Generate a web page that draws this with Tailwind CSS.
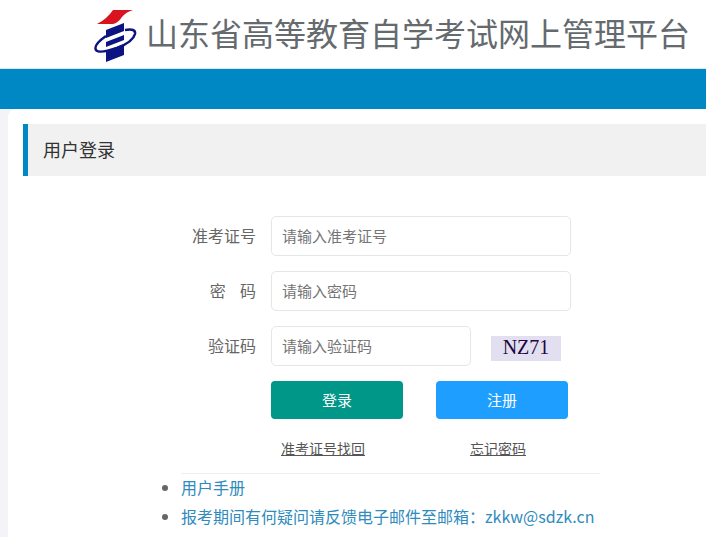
<!DOCTYPE html>
<html lang="zh-CN">
<head>
    <meta charset="UTF-8">
    <meta name="viewport" content="width=device-width, initial-scale=1.0">
    <title>山东省高等教育自学考试网上管理平台</title>
    <script src="https://cdn.jsdelivr.net/npm/@tailwindcss/browser@4"></script>
</head>
<body class="h-[537px] overflow-hidden bg-white font-['Noto_Sans_CJK_SC','Liberation_Sans',sans-serif] text-[#666]">
    <!-- Header -->
    <header class="h-[69px] flex items-center pl-[93px] bg-white border-b border-[#d8e6ee]">
        <svg width="44" height="54" viewBox="0 0 44 54" class="mt-[3px] shrink-0">
            <path d="M20 1 H40 Q33 3 29 8 Q25 14 20 15 H4 Q14 10 20 1 Z" fill="#d9141e"/>
            <path d="M13 21 L31 14 V22 L13 29 Z" fill="#0b1480"/>
            <path d="M13 33 L31 26 V31 L13 38 Z" fill="#0b1480"/>
            <path d="M13 42 L31 35 V46 L13 53 Z" fill="#0b1480"/>
            <path d="M32 21 Q43 19 42 25 Q40 33 24 39 Q6 45 3 41 Q0 36 13 27" fill="none" stroke="#0b1480" stroke-width="2.5"/>
        </svg>
        <h1 class="ml-[11px] text-[32px] leading-[40px] font-normal whitespace-nowrap text-[#646a6e] mt-[-5px] -translate-x-[2px]">山东省高等教育自学考试网上管理平台</h1>
    </header>
    <div class="h-10 bg-[#0088c4]"></div>

    <div class="flex bg-[#f3f3f8] h-[428px]">
        <main class="ml-2 flex-1 bg-white rounded-tl-[8px] pt-[15px] pl-[15px] overflow-hidden">
            <div class="h-[52px] bg-[#f1f1f1] border-l-[5px] border-[#0088c4] pl-[15px] pb-[2px] flex items-center text-[18px] text-[#333]">用户登录</div>

            <!-- Login form -->
            <form class="mt-10 flex flex-col gap-[15px]">
                <div class="flex items-center">
                    <label class="w-[233px] pb-[2px] text-right text-base text-[#666]">准考证号</label>
                    <input type="text" placeholder="请输入准考证号" class="ml-[15px] w-[300px] h-10 px-[10px] pb-[2px] text-[15px] border border-[#e6e6e6] rounded-[5px] placeholder:text-[#757575]">
                </div>
                <div class="flex items-center">
                    <label class="w-[233px] pb-[2px] text-right text-base text-[#666] whitespace-pre">密    码</label>
                    <input type="password" placeholder="请输入密码" class="ml-[15px] w-[300px] h-10 px-[10px] pb-[2px] text-[15px] border border-[#e6e6e6] rounded-[5px] placeholder:text-[#757575]">
                </div>
                <div class="flex items-center">
                    <label class="w-[233px] pb-[2px] text-right text-base text-[#666]">验证码</label>
                    <input type="text" placeholder="请输入验证码" class="ml-[15px] w-[200px] h-10 px-[10px] pb-[2px] text-[15px] border border-[#e6e6e6] rounded-[5px] placeholder:text-[#757575]">
                    <div class="ml-5 mt-[4px] w-[70px] h-[25px] pb-[2px] bg-[#e2e0f0] flex items-center justify-center font-['Liberation_Serif',serif] text-[20px] text-[#24063f]">NZ71</div>
                </div>
            </form>

            <div class="flex mt-[15px] ml-[248px] gap-[33px]">
                <button type="button" class="w-[132px] h-[38px] rounded-[4px] bg-[#009688] text-white text-[15px]">登录</button>
                <button type="button" class="w-[132px] h-[38px] rounded-[4px] bg-[#1e9fff] text-white text-[15px]">注册</button>
            </div>

            <div class="flex mt-[19px] ml-[258px] text-sm leading-5">
                <a href="#" class="underline text-[#555]">准考证号找回</a>
                <a href="#" class="underline text-[#555] ml-[105px]">忘记密码</a>
            </div>

            <div class="ml-[158px] mt-[15px] w-[419px] border-t border-[#eee]">
                <ul class="list-disc text-base leading-[29px] text-[#666] whitespace-nowrap -mt-[1px]">
                    <li><a href="#" class="text-[#2f8bbd]">用户手册</a></li>
                    <li><a href="#" class="text-[#2f8bbd]">报考期间有何疑问请反馈电子邮件至邮箱：zkkw@sdzk.cn</a></li>
                </ul>
            </div>
        </main>
    </div>
</body>
</html>
